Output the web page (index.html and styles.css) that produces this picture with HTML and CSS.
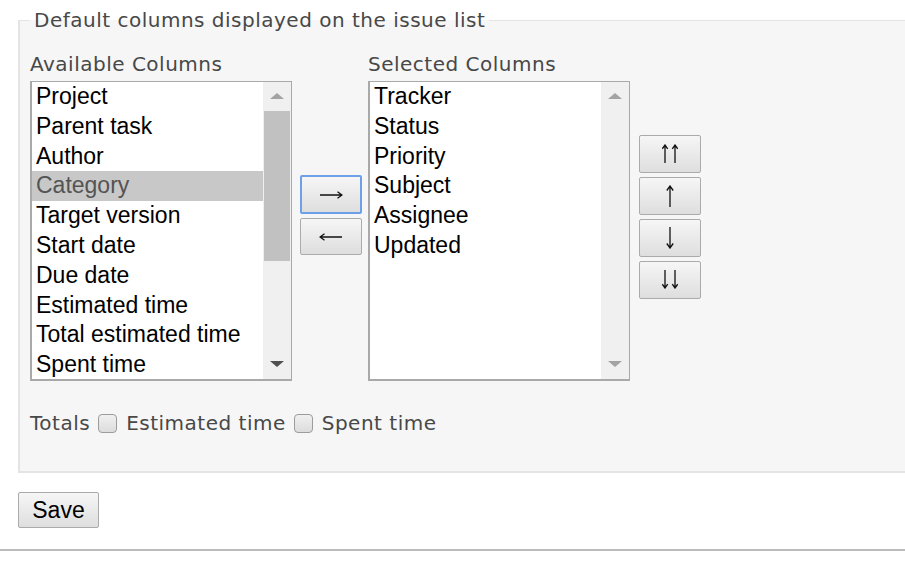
FILE: index.html
```html
<!DOCTYPE html>
<html lang="en">
<head>
  <meta charset="UTF-8">
  <title>Issue list settings</title>
  <link rel="stylesheet" href="styles.css">
</head>
<body>
  <div class="page">
    <form class="settings">
      <fieldset class="box">
        <legend>Default columns displayed on the issue list</legend>

        <div class="columns">
          <div class="col">
            <label class="col-title">Available Columns</label>
            <div class="listbox">
              <ul class="options">
                <li>Project</li>
                <li>Parent task</li>
                <li>Author</li>
                <li class="selected">Category</li>
                <li>Target version</li>
                <li>Start date</li>
                <li>Due date</li>
                <li>Estimated time</li>
                <li>Total estimated time</li>
                <li>Spent time</li>
              </ul>
              <div class="scrollbar">
                <span class="arrow up"></span>
                <span class="track"><span class="thumb"></span></span>
                <span class="arrow down"></span>
              </div>
            </div>
          </div>

          <div class="buttons">
            <button type="button" class="btn focused" title="&#8594;">
              <svg width="24" height="10" viewBox="0 0 24 10"><path d="M1 5H23M18.5 1.8L23 5L18.5 8.2"/></svg>
            </button>
            <button type="button" class="btn" title="&#8592;">
              <svg width="24" height="10" viewBox="0 0 24 10"><path d="M23 5H1M5.5 1.8L1 5L5.5 8.2"/></svg>
            </button>
          </div>

          <div class="col col-selected">
            <label class="col-title">Selected Columns</label>
            <div class="listbox">
              <ul class="options">
                <li>Tracker</li>
                <li>Status</li>
                <li>Priority</li>
                <li>Subject</li>
                <li>Assignee</li>
                <li>Updated</li>
              </ul>
              <div class="scrollbar disabled">
                <span class="arrow up"></span>
                <span class="track"></span>
                <span class="arrow down"></span>
              </div>
            </div>
          </div>

          <div class="buttons">
            <button type="button" class="btn" title="&#8648;">
              <svg width="16" height="19" viewBox="0 0 16 19"><path d="M3 1V19M0.3 4.8L3 1L5.7 4.8M13 1V19M10.3 4.8L13 1L15.7 4.8"/></svg>
            </button>
            <button type="button" class="btn" title="&#8593;">
              <svg width="10" height="22" viewBox="0 0 10 22"><path d="M5 1V22M1.8 5.5L5 1L8.2 5.5"/></svg>
            </button>
            <button type="button" class="btn" title="&#8595;">
              <svg width="10" height="22" viewBox="0 0 10 22"><path d="M5 0V21M1.8 16.5L5 21L8.2 16.5"/></svg>
            </button>
            <button type="button" class="btn" title="&#8650;">
              <svg width="16" height="19" viewBox="0 0 16 19"><path d="M3 0V18M0.3 14.2L3 18L5.7 14.2M13 0V18M10.3 14.2L13 18L15.7 14.2"/></svg>
            </button>
          </div>
        </div>

        <p class="totals">
          Totals
          <label><input type="checkbox"> Estimated time</label>
          <label><input type="checkbox"> Spent time</label>
        </p>
      </fieldset>

      <button type="button" class="btn save">Save</button>
    </form>
    <hr>
  </div>
</body>
</html>
```

FILE: styles.css
```css
body {
  margin: 0;
  background: #fff;
  color: #484848;
  font-family: 'DejaVu Sans', Verdana, sans-serif;
  font-size: 20px;
  letter-spacing: 0.5px;
}

.page {
  overflow: hidden;
  padding-top: 8px;
}

.settings {
  padding-left: 18px;
}

.box {
  margin: 0 -20px 0 0;
  padding: 20px 10px 36px 10px;
  background: #f6f6f6;
  border: 2px solid #e4e4e4;
  border-top-width: 1px;
}

.box legend {
  padding: 0 4px;
  line-height: 24px;
  color: #484848;
}

.columns {
  display: flex;
  align-items: center;
}

.col {
  display: flex;
  flex-direction: column;
  width: 262px;
}

.col-title {
  line-height: 24px;
  margin-bottom: 5px;
}

.listbox {
  display: flex;
  height: 300px;
  box-sizing: border-box;
  background: #fff;
  border: 2px solid #a9a9a9;
  border-top-width: 1px;
  border-right-width: 1px;
}

.options {
  flex: 1;
  list-style: none;
  margin: 0;
  padding: 0;
  font-family: 'Liberation Sans', Arial, sans-serif;
  font-size: 23px;
  letter-spacing: 0;
  color: #000;
  overflow: hidden;
}

.options li {
  height: 29.8px;
  line-height: 29.8px;
  padding-left: 4px;
  white-space: nowrap;
}

.options li.selected {
  background: #c8c8c8;
  color: #545454;
}

.scrollbar {
  width: 28px;
  flex-shrink: 0;
  display: flex;
  flex-direction: column;
  align-items: center;
  background: #f0f0f0;
}

.scrollbar .track {
  flex: 1;
  width: 100%;
  padding: 0 1px;
  box-sizing: border-box;
}

.scrollbar .thumb {
  display: block;
  height: 150px;
  background: #c1c1c1;
}

.arrow {
  width: 0;
  height: 0;
  border-left: 7px solid transparent;
  border-right: 7px solid transparent;
  margin: 11px 0 12px;
}

.arrow.up {
  border-bottom: 6px solid #a3a3a3;
}

.arrow.down {
  border-top: 6px solid #505050;
}

.scrollbar.disabled .arrow.down {
  border-top-color: #a3a3a3;
}

.buttons {
  display: flex;
  flex-direction: column;
  gap: 4px;
  margin: 0 6px 0 8px;
  padding-bottom: 3px;
}

.btn {
  width: 62px;
  height: 38px;
  padding: 0;
  display: flex;
  align-items: center;
  justify-content: center;
  font-family: 'Liberation Sans', Arial, sans-serif;
  letter-spacing: 0;
  color: #000;
  background: linear-gradient(#f6f6f6, #dedede);
  border: 1px solid #ababab;
  border-radius: 2px;
}

.btn svg {
  fill: none;
  stroke: #111;
  stroke-width: 1.3;
}

.btn.focused {
  height: 39px;
  border: 2px solid #6da0e8;
}

.buttons .btn + .btn {
  height: 37px;
}

.buttons:last-child {
  margin-left: 9px;
  padding-bottom: 0;
}

.buttons:last-child .btn {
  height: 38px;
}

.totals {
  margin: 30px 0 0;
  line-height: 24px;
  display: flex;
  align-items: center;
  gap: 8px;
}

.totals label {
  display: flex;
  align-items: center;
  gap: 9px;
}

.totals input {
  appearance: none;
  -webkit-appearance: none;
  margin: 0;
  width: 19px;
  height: 19px;
  border: 1px solid #9c9c9c;
  border-radius: 4px;
  background: linear-gradient(#f0f0f0, #dcdcdc);
}

.save {
  margin-top: 19px;
  width: 81px;
  height: 36px;
  font-size: 23px;
}

hr {
  margin: 21px 0 0;
  border: 0;
  border-top: 2px solid #bbb;
}
```
